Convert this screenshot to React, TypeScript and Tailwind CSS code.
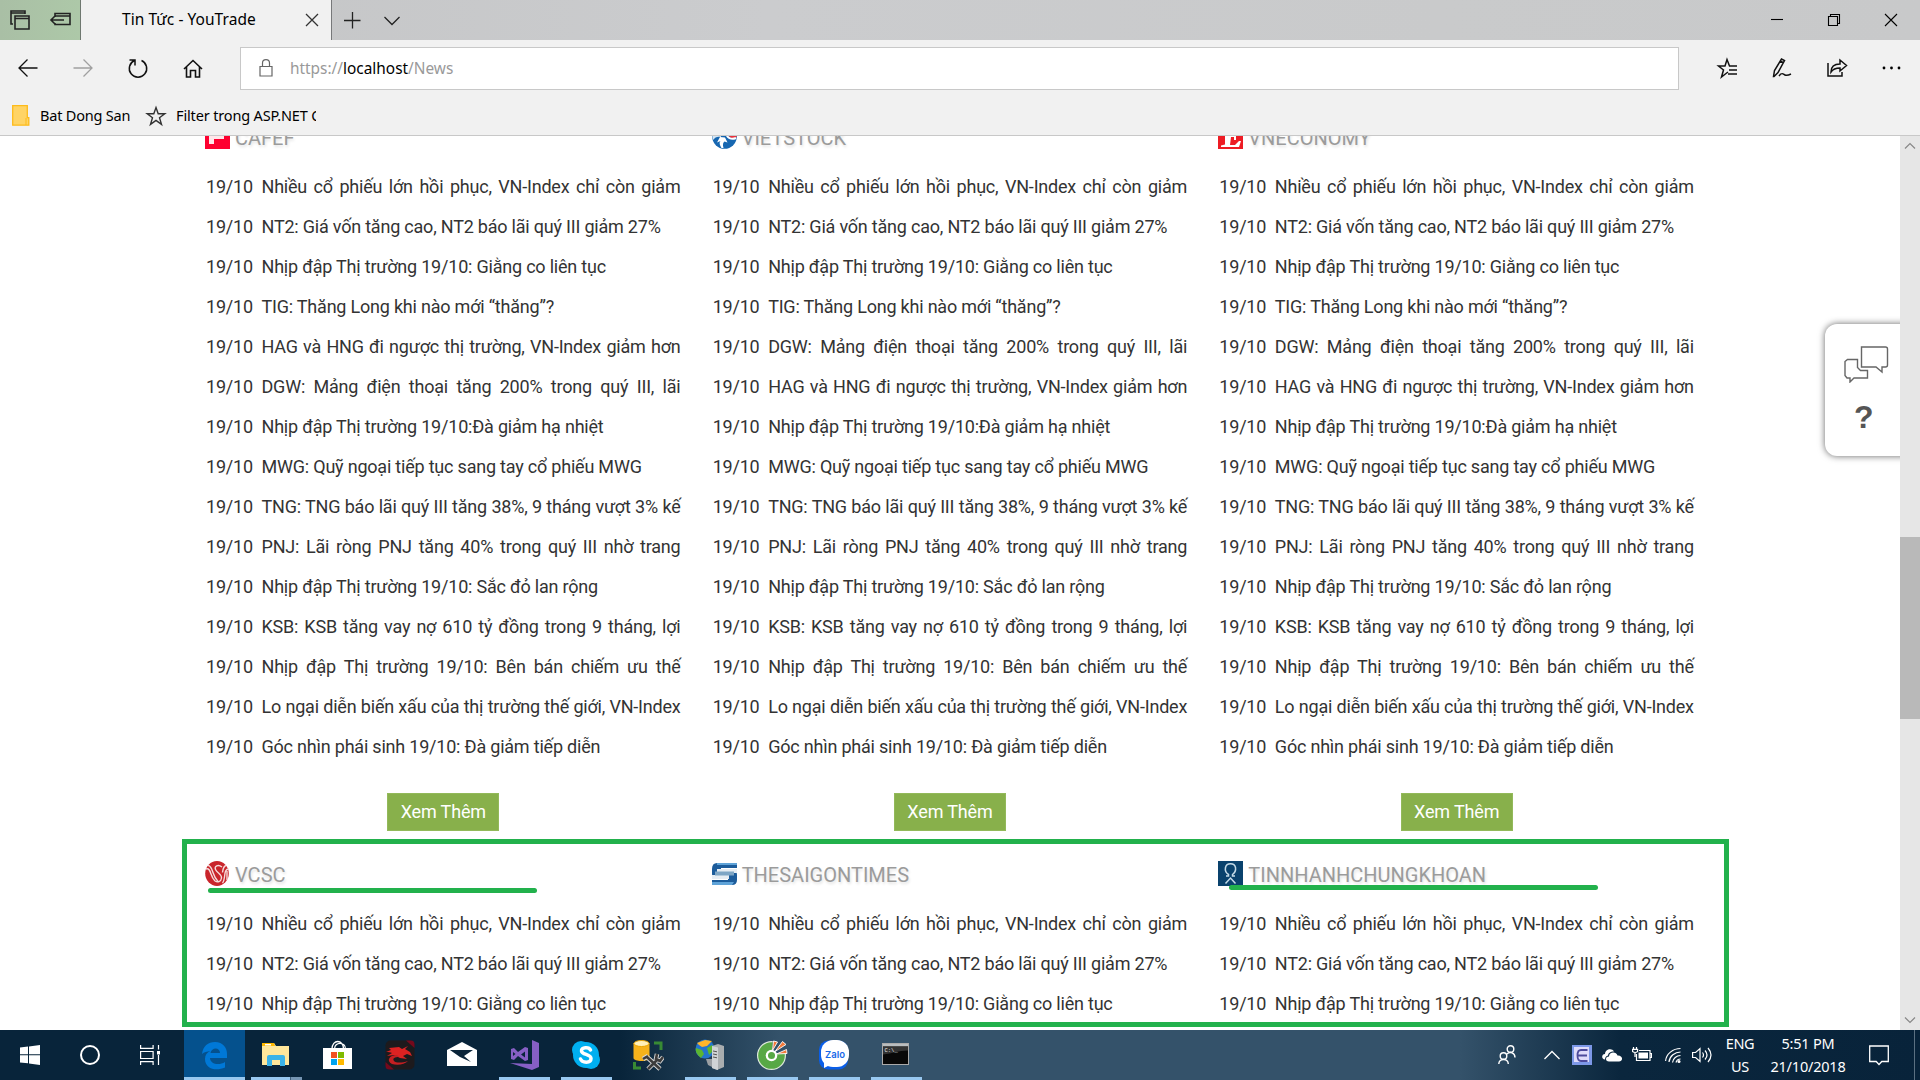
import React from "react";

const COMMON_TOP = [
  "Nhiều cổ phiếu lớn hồi phục, VN-Index chỉ còn giảm",
  "NT2: Giá vốn tăng cao, NT2 báo lãi quý III giảm 27%",
  "Nhịp đập Thị trường 19/10: Giằng co liên tục",
  "TIG: Thăng Long khi nào mới “thăng”?",
];
const HAG = "HAG và HNG đi ngược thị trường, VN-Index giảm hơn";
const DGW = "DGW: Mảng điện thoại tăng 200% trong quý III, lãi";
const COMMON_REST = [
  "Nhịp đập Thị trường 19/10:Đà giảm hạ nhiệt",
  "MWG: Quỹ ngoại tiếp tục sang tay cổ phiếu MWG",
  "TNG: TNG báo lãi quý III tăng 38%, 9 tháng vượt 3% kế",
  "PNJ: Lãi ròng PNJ tăng 40% trong quý III nhờ trang",
  "Nhịp đập Thị trường 19/10: Sắc đỏ lan rộng",
  "KSB: KSB tăng vay nợ 610 tỷ đồng trong 9 tháng, lợi",
  "Nhịp đập Thị trường 19/10: Bên bán chiếm ưu thế",
  "Lo ngại diễn biến xấu của thị trường thế giới, VN-Index",
  "Góc nhìn phái sinh 19/10: Đà giảm tiếp diễn",
];
const JUSTIFIED = new Set([
  COMMON_TOP[0], HAG, DGW, COMMON_REST[2], COMMON_REST[3], COMMON_REST[5], COMMON_REST[6], COMMON_REST[7],
]);

type Source = { name: string; logo: React.ReactNode; items: string[] };

const CafefLogo = () => (
  <svg className="size-[25px]" viewBox="0 0 25 25"><rect width="25" height="25" fill="#fe0030" /><path d="M4 3h17v4H4zM4 3h5v17H4zM4 11h15v4H4z" fill="#fff" opacity=".9" /></svg>
);
const VietstockLogo = () => (
  <svg className="size-[25px]" viewBox="0 0 25 25"><circle cx="12.5" cy="12.5" r="12.3" fill="#1767b1" /><path d="M11 1C19 0 25 6 24.6 13c-2 2-5 2-8-1z" fill="#e8323c" /><path d="M14 9c1 5 5 7 10 5" stroke="#fff" strokeWidth="2" fill="none" /><path d="M0 10c3-1 6-1 9 0v3C6 12 3 13 1 16z" fill="#d6e6f3" /><path d="M9.500 24C7 20 7.500 18 8.500 17L5 18.500l3-5.500 5 .5 2.500 5-3-1c-1.500 1-2 3-1 6.500z" fill="#fff" /></svg>
);
const VneconomyLogo = () => (
  <svg className="size-[25px]" viewBox="0 0 25 25"><rect width="25" height="25" fill="#ed1c24" /><path d="M5 3h16v6h-2l-2-4h-4v6h3V9h2v7h-2v-3h-3l-1 8h5l4-4h2l-2 6H3v-1.500l4-1V5L5 4.500z" fill="#fff" /></svg>
);
const VcscLogo = () => (
  <svg className="size-[25px]" viewBox="0 0 25 25"><ellipse cx="12" cy="12.500" rx="11.800" ry="12.400" fill="#c9252b" /><g fill="none" stroke="#f6dcdc" strokeWidth="1.400"><path d="M1 8c3-1 4 2 5 5s2 5 4 7M3 4.500c3 0 4 4 5 7s2 6 5 9" /><path d="M17 6c-4-3-8-1-6.500 2.500S17 13 16.500 17s-4 4.500-6.500 3" /><path d="M24 8c-4 0-4 4-4.500 8s-1 5-2 6M21 4.500c-3 1-3 4-3.500 7M22 10v9" /></g></svg>
);
const SaigonLogo = () => (
  <svg className="size-[25px]" viewBox="0 0 25 25"><path d="M5 2h20v5H9v3h13q3 0 3 4v5q0 5-5 5H0v-5h16v-2H4q-4 0-4-4V8q0-6 5-6z" fill="#1c5c9b" /><path d="M5 2h20v2H5zM0 21h22l-2 3H0z" fill="#5fa3d8" /><path d="M5 8h20v4H5zM0 14h17v4H0z" fill="#e6edf3" /><path d="M3 10.500h19v4H3z" fill="#7ea6c5" /></svg>
);
const TinnhanhLogo = () => (
  <svg className="size-[25px]" viewBox="0 0 25 25"><rect width="25" height="25" fill="#0a426d" /><g fill="none" stroke="#c5dbe8" strokeWidth="1.500"><path d="M8 15h2.500v-1.500C8 12 7 9 7.500 6.500 8.500 1.500 16.500 1.500 17.500 6.500c.5 3-1 5.500-3 7V15H17" /><path d="M7.500 22.500l5-5.500 5 5.500" /></g></svg>
);

const sectionOne: Source[] = [
  { name: "CAFEF", logo: <CafefLogo />, items: [...COMMON_TOP, HAG, DGW, ...COMMON_REST] },
  { name: "VIETSTOCK", logo: <VietstockLogo />, items: [...COMMON_TOP, DGW, HAG, ...COMMON_REST] },
  { name: "VNECONOMY", logo: <VneconomyLogo />, items: [...COMMON_TOP, DGW, HAG, ...COMMON_REST] },
];
const sectionTwo: Source[] = [
  { name: "VCSC", logo: <VcscLogo />, items: COMMON_TOP.slice(0, 3) },
  { name: "THESAIGONTIMES", logo: <SaigonLogo />, items: COMMON_TOP.slice(0, 3) },
  { name: "TINNHANHCHUNGKHOAN", logo: <TinnhanhLogo />, items: COMMON_TOP.slice(0, 3) },
];

function NewsColumn({ source, more }: { source: Source; more?: boolean }) {
  return (
    <section className="flex flex-col px-[15px]">
      <h3 className="mb-[18px] flex h-[25px] items-center gap-[5px] text-[20px] leading-[25px] text-[#9b9b9b] [text-shadow:1px_2px_3px_rgba(0,0,0,0.12)]">
        {source.logo}
        <span className="mt-[3px]">{source.name}</span>
      </h3>
      <ul>
        {source.items.map((t) => (
          <li key={t} className="flex h-10 pl-[1px] text-[18px] leading-10 tracking-[-0.21px] text-[#333]">
            <span className="w-[55.5px] shrink-0">19/10</span>
            <span className={JUSTIFIED.has(t) ? "w-[419px] shrink-0 [text-align-last:justify]" : "whitespace-nowrap"}>{t}</span>
          </li>
        ))}
      </ul>
      {more && (
        <button className="mt-[26px] h-[38px] w-[112px] self-center border border-[#93b95a] bg-[#88b04b] text-[18px] leading-9 tracking-[-0.15px] text-white">Xem Thêm</button>
      )}
    </section>
  );
}

function Line({ d, size = 24, color = "#111", w = 1.3 }: { d: string; size?: number; color?: string; w?: number }) {
  return (
    <svg width={size} height={size} viewBox="0 0 24 24" fill="none" stroke={color} strokeWidth={w}><path d={d} /></svg>
  );
}

function Browser() {
  return (
    <header className="h-[136px] border-b border-[#c8c8c8] bg-[#f1f1f1] font-['Noto_Sans','Open_Sans',sans-serif] text-black">
      <div className="flex h-10 bg-[linear-gradient(90deg,#c3c4c5,#cbccce_40%,#c9cacb_75%,#c8c9ca)]">
        <div className="flex w-[81px] items-center border-r border-[#6f7870] bg-[linear-gradient(90deg,#a9bfa5,#adc8a8)]">
          <div className="flex w-10 justify-center"><Line w={1.6} color="#222" d="M5 16H3V3h14v3M3 5h14M7 8h14v13H7zM7 10.500h14" /></div>
          <div className="flex w-10 justify-center"><Line w={1.6} color="#222" d="M7 9V5.500h15v11H7V15M7 8h15M3 12h13M7 8l-4 4 4 4" /></div>
        </div>
        <div className="flex w-[251px] items-center justify-between border-r border-[#77787a] bg-[#f1f1f1] pr-[7px] pl-[41px]">
          <span className="text-[15.5px] tracking-[0.05px]">Tin Tức - YouTrade</span>
          <Line color="#333" d="M6 6l12 12M18 6L6 18" />
        </div>
        <div className="flex w-10 items-center justify-center"><Line color="#222" d="M4 12.500h16.500M12.500 4v16.500" /></div>
        <div className="flex w-10 items-center justify-center"><Line color="#222" d="M4.500 9l7.500 7.500L19.500 9" /></div>
        <div className="ml-auto flex items-center pr-[1px]">
          <div className="flex w-[57px] justify-center"><Line color="#000" w={1.1} d="M6 11.500h12" /></div>
          <div className="flex w-[57px] justify-center"><Line color="#000" w={1.1} d="M6.500 8.500h9v9h-9zM8.500 8.500v-2h9v9h-2" /></div>
          <div className="flex w-[57px] justify-center"><Line color="#000" w={1.1} d="M6 6l12 12M18 6L6 18" /></div>
        </div>
      </div>
      <div className="flex h-14 items-center">
        <div className="flex w-[240px] [&>div]:flex [&>div]:w-[55px] [&>div]:justify-center">
          <div><Line d="M3 12h18.500M11.500 3.500L3 12l8.500 8.500" /></div>
          <div><Line color="#a0a0a0" d="M2.500 12H21M12.500 3.500L21 12l-8.500 8.500" /></div>
          <div><Line w={1.5} d="M8.500 4.500A8.700 8.700 0 1 0 15.500 4.500M3.500 4H9v5.500" /></div>
          <div><Line w={1.6} d="M3 13l9-8.500 9 8.500M5.500 11v10h4v-6.500h5V21h4V11" /></div>
        </div>
        <div className="flex h-[43px] w-[1439px] items-center border border-[#c8c8c8] bg-white pl-[13px]">
          <Line color="#666" w={1.2} d="M6 10.500h12v9.500H6zM8.500 10.500V7c0-4.500 7-4.500 7 0v3.500" />
          <span className="mt-[2px] ml-[12px] text-[15.400px] text-[#999]">https://<span className="text-black">localhost</span>/News</span>
        </div>
        <div className="ml-auto flex pr-[1px] [&>div]:flex [&>div]:w-[55px] [&>div]:justify-center">
          <div className="pl-[2px]"><Line w={1.5} d="M21 10h-7.500L11 3.500 9 10H2.500l5 4-2 7 4.500-3.500M13 14h8M12 18h9M10 17.500l2-1.500" /></div>
          <div className="pl-[2px]"><Line w={1.5} d="M2.500 20.500l1-6 7-11.500 3 1.500-6.500 12-4 4zM9 5l3 1.500M8 20c3-4 4-2 6-1s4 0 6-1" /></div>
          <div><Line w={1.5} d="M3 7v13h14v-4M6 16c0-5 3-8 9-8V4l6.500 5.500L15 15v-3c-5 0-7 1-9 4z" /></div>
          <div><svg width="24" height="24" viewBox="0 0 24 24"><circle cx="4" cy="12" r="1.400" /><circle cx="11.500" cy="12" r="1.400" /><circle cx="19" cy="12" r="1.400" /></svg></div>
        </div>
      </div>
      <div className="flex h-[39px] items-center pl-3 text-[14.500px]">
        <svg width="18" height="21" viewBox="0 0 18 21"><path d="M.7.7h14.600v12h1.500v7.500H.7z" fill="#ffd465" stroke="#fdbb1a" strokeWidth="1.300" /><path d="M14 13v7" stroke="#fdbb1a" /></svg>
        <span className="ml-[10px] w-[104px] tracking-[-0.2px] whitespace-nowrap">Bat Dong San</span>
        <Line w={1.400} color="#333" d="M12 3.500l2.200 6.300h6.600l-5.300 4 2 6.600-5.500-4-5.500 4 2-6.600-5.300-4h6.600z" />
        <span className="ml-[8px] w-[140px] overflow-hidden tracking-[-0.15px] whitespace-nowrap">Filter trong ASP.NET C</span>
      </div>
    </header>
  );
}

const ICON = "size-8";
const apps: { icon: React.ReactNode; state?: "active" | "open" | "group" }[] = [
  { state: "active", icon: <svg className={ICON} viewBox="0 0 32 32"><path d="M4 15C5 7 10 3 17 3c8 0 12 6 12 12v4H12c0 6 9 8 15 4v5.500c-9 4-20 1.500-20-8.500 0-4 2-6.500 5.500-8C9 12.500 6 13 4 15zm8.500-1h9.500c0-6-8.500-6-9.500 0z" fill="#0078d7" /></svg> },
  { state: "group", icon: <svg className={ICON} viewBox="0 0 32 32"><path d="M2 4h12l2 3h13v19H2z" fill="#ffe79b" /><path d="M2 4h12l1 3H2z" fill="#ffb900" /><path d="M5 5h6v1.500H5z" fill="#fff" /><path d="M7 27V18q0-2 2-2h14q2 0 2 2v9h-5v-6h-8v6z" fill="#3bb3e8" /></svg> },
  { icon: <svg className={ICON} viewBox="0 0 32 32"><path d="M1 9h29v21H1z" fill="#fff" /><path d="M10 10C10 0 21.500 0 21.500 10M12.500 10C12.500 2.500 23.500 2.500 23.500 10" fill="none" stroke="#fff" strokeWidth="1.300" /><path d="M9 13h6v6H9z" fill="#f25022" /><path d="M16 13h6v6h-6z" fill="#7fba00" /><path d="M9 20h6v6H9z" fill="#00a4ef" /><path d="M16 20h6v6h-6z" fill="#ffb900" /></svg> },
  { icon: <svg className={ICON} viewBox="0 0 32 32"><rect x="1.500" y="1.500" width="29" height="29" rx="5" fill="#1d1a1d" /><path d="M22 1.500h5q3.500 0 3.500 4V9zM1.500 23v4q0 3.500 4 3.500H10z" fill="#75091c" /><path d="M5 9l10-1 3 2 6-3-3 3 5 3 2 4-5-2-4 2 4 3-7-1-6-3-7 1 5-3c-2-1-3-1-6-1l5-2z" fill="#dd2222" /><path d="M13 16c-8 0-11 6-5 9 6 2 13 0 16-3-6 2-12 2-14 0-2-3 1-4 5-4z" fill="#c41f22" /></svg> },
  { icon: <svg className={ICON} viewBox="0 0 32 32"><path d="M1 11L16 3l15 8v16H1z" fill="#fff" /><path d="M4 11h23l-9 6 7 6-11-5z" fill="#0a2439" /></svg> },
  { state: "open", icon: <svg className={ICON} viewBox="0 0 32 32"><path d="M24 1l7 3v24l-7 3L2 24l22 1z" fill="#865fc5" /><path d="M3 10l3-1 4 4 7-5 3 1v12l-3 1-7-5-4 4-3-1zm2 3v4l2.500-2zm12-.5l-4 3 4 3z" fill="#865fc5" fillRule="evenodd" /></svg> },
  { state: "open", icon: <svg className={ICON} viewBox="0 0 32 32"><circle cx="11" cy="11" r="9" fill="#00aff0" /><circle cx="21" cy="21" r="9" fill="#00aff0" /><circle cx="16" cy="16" r="13" fill="#00aff0" /><path d="M20.500 11C19 7.500 11 8 11.500 12s9.500 3 9.500 7.500c0 5-9 4.500-10.500.5" fill="none" stroke="#fff" strokeWidth="3.500" strokeLinecap="round" /></svg> },
  { icon: <svg className={ICON} viewBox="0 0 32 32"><path d="M1.500 4v15c0 4 16 4 16 0V4z" fill="#f5b21b" /><ellipse cx="9.500" cy="4.500" rx="7.500" ry="3" fill="#fff0b8" stroke="#e9a400" /><path d="M22 4h7v7M2.500 23v6H9" fill="none" stroke="#388a34" strokeWidth="3" /><path d="M11 20l5-3M15 18l13 12M16 30l10-10M25 15l-1 5 4 2 3-4" stroke="#d8d8d8" strokeWidth="4.500" fill="none" /><path d="M11 20l5-3M15 18l13 12M16 30l10-10M25 15l-1 5 4 2 3-4" stroke="#3c3c3c" strokeWidth="2.600" fill="none" /></svg> },
  { state: "open", icon: <svg className={ICON} viewBox="0 0 32 32"><circle cx="11" cy="10" r="9.500" fill="#2475cd" /><path d="M3 4l8-3 7 1-5 5-5 1-3-2z" fill="#ffb52a" /><path d="M2 9l6 2 2 4-3 4C3 16 1 12 2 9zM13 9l5-3 2 5-5 5z" fill="#5cb531" /><path d="M12 20h8v9l-6-3z" fill="#9b9fa3" /><path d="M18 7l6-2 6 2v21l-7 3-5-2z" fill="#a9adaf" /><path d="M18 7l6 1.500V31l-6-2z" fill="#d0d3d5" /><path d="M19 12l4 .800M19 15l4 .800M19 18l4 .800" stroke="#555" /></svg> },
  { state: "open", icon: <svg className={ICON} viewBox="0 0 32 32"><circle cx="15.500" cy="16.500" r="14.500" fill="#dfe9dc" /><circle cx="15.500" cy="16.500" r="13.300" fill="#57a845" /><path d="M15.500 16.500L17 0h14v12z" fill="#34526a" /><path d="M16.500 11.500L17.500 2l4 1zM19 12.500l7.500-10 3.500 3zM20.500 15l10-4.500.5 4z" fill="#f2793a" stroke="#fff" strokeWidth=".9" /><circle cx="15.500" cy="16.500" r="5.800" fill="#fff" /><circle cx="15.500" cy="16.500" r="3.500" fill="#57a845" /></svg> },
  { state: "open", icon: <svg className={ICON} viewBox="0 0 32 32"><rect x="1" y="1.500" width="29" height="29" rx="9" fill="#0a5ee8" /><rect x="3" y="1" width="28" height="27" rx="12" fill="#fff" /><path d="M6 22v7l6-3z" fill="#fff" /><text x="17" y="18.500" textAnchor="middle" fontFamily="Inter, sans-serif" fontWeight="600" fontSize="9.500" fill="#1668e8">Zalo</text></svg> },
  { state: "open", icon: <svg className={ICON} viewBox="0 0 32 32"><rect x="2.500" y="4.500" width="26" height="21" fill="#080808" stroke="#aaa" /><path d="M3 5h25v2.500H3z" fill="#b9bdbf" /><path d="M3 7.500h25v4c-10 0-15 3-25 4z" fill="#333" /><text x="4.500" y="12.500" fontFamily="Liberation Mono, monospace" fontSize="5.500" fill="#eee">C:\_</text></svg> },
];

function Taskbar() {
  return (
    <footer className="flex h-[50px] bg-[linear-gradient(90deg,#08243a_0px,#08243a_620px,#34526a_780px,#34526a_1460px,#0a263d_1620px,#08233a_1920px)] font-['Noto_Sans','Open_Sans',sans-serif] text-white">
      <div className="flex w-[60px] items-center justify-center"><svg width="20" height="20" viewBox="0 0 20 20" fill="#fff"><path d="M0 2.500l8-1V9.300H0zM9 1.400L20 0v9.300H9zM0 10.300h8v8L0 17.500zM9 10.300h11V20L9 18.600z" /></svg></div>
      <div className="flex w-[60px] items-center justify-center"><div className="size-5 rounded-full border-[2.500px] border-white" /></div>
      <div className="mr-[3px] flex w-[60px] items-center justify-center"><svg width="20" height="20" viewBox="0 0 20 20" fill="none" stroke="#fff" strokeWidth="1.200"><path d="M.6 0v3.400h12.500V0M.6 6.500h12.500v7H.6zM.6 20v-3.400h12.500V20M18.500 0v4.500M18.500 10v10" /><path d="M17 6h3v3.500h-3z" fill="#fff" stroke="none" /></svg></div>
      {apps.map((a, i) => (
        <div key={i} className="flex w-[62px] flex-col items-center px-[0.5px]">
          <div className={a.state === "active" ? "flex h-[47px] w-[61px] items-center justify-center bg-[#05518d] pt-[3px]" : "flex h-[47px] items-center pt-[3px]"}>{a.icon}</div>
          {a.state === "active" && <div className="h-[3px] w-[61px] bg-[#98c8f0]" />}
          {a.state === "open" && <div className="h-[3px] w-[51px] bg-[#98c8f0]" />}
          {a.state === "group" && <div className="flex h-[3px] w-[51px] bg-[#7595b3]"><div className="w-10 border-r border-[#405f7b] bg-[#98c8f0]" /></div>}
        </div>
      ))}
      <div className="ml-auto flex items-center">
        <svg className="mr-[28px]" width="18" height="20" viewBox="0 0 18 20" fill="none" stroke="#fff" strokeWidth="1.400"><circle cx="12.500" cy="4" r="3.300" /><circle cx="5.500" cy="11" r="3.300" /><path d="M.8 19c0-6 9.500-6 9.500 0M9 9c3-3 8-1 8 3.500" /></svg>
        <svg className="mr-[12px]" width="16" height="20" viewBox="0 0 16 20" fill="none" stroke="#fff" strokeWidth="1.300"><path d="M.5 14L8 6.500l7.500 7.500" /></svg>
        <svg className="mr-[10px]" width="20" height="20" viewBox="0 0 20 20"><rect width="20" height="20" fill="#7d98e8" /><rect x="2" y="2" width="15" height="15" fill="#dfdcfb" /><path d="M15.500 5H9Q5.500 5 5.500 10.500T9 16h6.500M6 10.500h9" fill="none" stroke="#4d4a9c" strokeWidth="1.800" /></svg>
        <svg className="mr-[10px]" width="20" height="20" viewBox="0 0 20 20"><path d="M3 14.500C-1 14-.5 9 3 9c0-5 7-6.500 9-2.500-4 0-6 2-6 4-2 .5-3 2-3 4zM7 16.500c-4 0-4-5 0-5 0-5 7.500-5 8.500-1 5.500-.5 6 6 1.500 6z" fill="#fff" /></svg>
        <svg className="mr-[13px]" width="20" height="20" viewBox="0 0 20 20" fill="none" stroke="#fff" strokeWidth="1.200"><path d="M7 5.500h11v10H4.500V9M18 8.500h1.500v4H18M1.500 2v2M4.500 2v2M.6 4.300h5v2.200q-2.500 2-5 0zM3 8v4" /><path d="M6.500 7.500h9.500v6H6.500z" fill="#fff" stroke="none" /></svg>
        <svg className="mr-[11px]" width="16" height="20" viewBox="0 0 16 20" fill="none" stroke="#fff" strokeWidth="1.200"><path d="M.6 16C1 9 8 3.500 15.500 3.500M4 17c.5-6 6-10 11.500-10M7.500 17.500c.5-4 4-7 8-7M11 17.500c.5-2 2-3.500 4.500-3.500" /><circle cx="14" cy="16.500" r="1.500" fill="#fff" stroke="none" /></svg>
        <svg className="mr-[8px]" width="20" height="20" viewBox="0 0 20 20" fill="none" stroke="#fff" strokeWidth="1.200"><path d="M.6 7.500h3L8 3.500v13l-4.400-4h-3zM10.500 7.500q2 2.500 0 5M13 5.500q4 4.500 0 9M16 3q6 7 0 14" /></svg>
        <div className="-mt-[1px] w-[40px] text-center text-[14.500px] leading-[23px] tracking-[-0.4px]">ENG<br />US</div>
        <div className="-mt-[1px] w-[96px] text-center text-[14.500px] leading-[23px] tracking-[-0.2px]">5:51 PM<br />21/10/2018</div>
        <svg className="ml-[13px]" width="20" height="21" viewBox="0 0 20 21" fill="none" stroke="#fff" strokeWidth="1.300"><path d="M.7 1h18.600v15.500h-6.500L10 19.500 7.200 16.500H.7z" /></svg>
        <div className="ml-[25px] h-[50px] w-[6px] border-l border-[#5b7081]" />
      </div>
    </footer>
  );
}

export default function App() {
  return (
    <div className="flex h-[1080px] w-[1920px] flex-col overflow-hidden bg-white">
      <Browser />
      <div className="relative flex h-[894px] overflow-hidden">
        <main className="h-[894px] w-[1900px] overflow-hidden bg-white pl-[190px] font-['Roboto',sans-serif]">
          <div className="-mt-[12px] grid w-[1520px] grid-cols-3">
            {sectionOne.map((s) => <NewsColumn key={s.name} source={s} more />)}
          </div>
          <div className="mt-[30px] grid w-[1520px] grid-cols-3">
            {sectionTwo.map((s) => <NewsColumn key={s.name} source={s} />)}
          </div>
        </main>
        <div className="flex w-5 flex-col items-center justify-between bg-[#e6e6e6]">
          <svg width="20" height="20" viewBox="0 0 20 20" fill="none" stroke="#888" strokeWidth="1.200"><path d="M5 12.500l5-5 5 5" /></svg>
          <svg width="20" height="20" viewBox="0 0 20 20" fill="none" stroke="#888" strokeWidth="1.200"><path d="M5 7.500l5 5 5-5" /></svg>
        </div>
        <div className="absolute top-[401px] left-[1900px] h-[182px] w-5 bg-[#b9b9b9]" />
        <div className="absolute top-[703px] left-[182px] h-[188px] w-[1547px] border-[5px] border-[#22b14c]" />
        <div className="absolute top-[752px] left-[208px] h-[5px] w-[329px] rounded-full bg-[#22b14c]" />
        <div className="absolute top-[749px] left-[1229px] h-[5px] w-[369px] rounded-full bg-[#22b14c]" />
        <div className="absolute top-[180px] left-[1810px] h-[150px] w-[90px] overflow-hidden">
          <div className="mt-[8px] ml-[15px] flex h-[132px] w-[90px] flex-col rounded-l-[12px] bg-white pt-[21px] shadow-[0_0_7px_rgba(0,0,0,0.6)]">
            <svg className="ml-[19px]" width="45" height="38" viewBox="0 0 45 38" fill="none" stroke="#666" strokeWidth="1.400"><path d="M17.500 2h24q2 0 2 2v16q0 2-2 2h-3.500v5l-6-5H17.500z" /><path d="M13.500 14.500h-10l-2.500 2v14l2 2.500h3v4l4-4h13.500v-7.500h-7l-3-3z" /></svg>
            <span className="ml-[29px] mt-[14px] font-['Liberation_Sans',sans-serif] text-[32px] leading-[40px] font-bold text-[#555]">?</span>
          </div>
        </div>
      </div>
      <Taskbar />
    </div>
  );
}
